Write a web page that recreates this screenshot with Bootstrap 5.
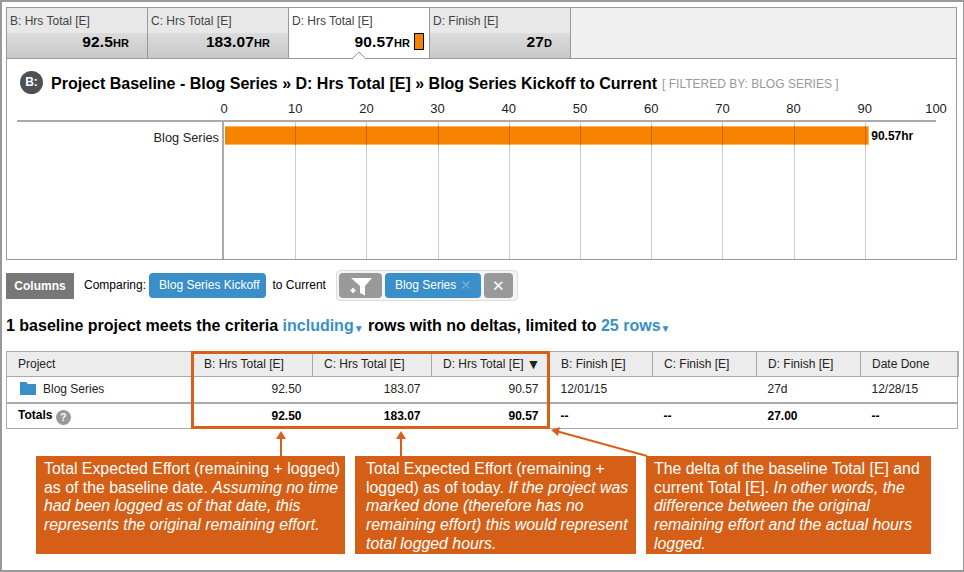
<!DOCTYPE html>
<html lang="en"><head><meta charset="utf-8">
<link href="https://cdn.jsdelivr.net/npm/bootstrap@5.3.0/dist/css/bootstrap.min.css" rel="stylesheet">
<style>
html,body{margin:0;background:#fff}
body{font-family:"Liberation Sans",Arial,sans-serif;color:#000;font-size:12px;width:964px;height:572px;overflow:hidden}
.frame{width:964px;height:572px;border:2px solid #999;border-right-width:1px;padding:5px 6px 0 4px;position:relative}
.tabbar{height:52px;border:1px solid #999;background:#f0f0f0}
.stab{width:141px;border-right:1px solid #999;background:linear-gradient(#e8e8e8 0,#e8e8e8 49%,#dcdcdc 50%,#c8c8c8 100%);padding:6px 3px 0 3px;position:relative}
.stab-on{background:#fff}
.stab-title{font-size:12px;color:#444;line-height:14px}
.stab-val{font-size:15.5px;font-weight:700;line-height:18px;margin-top:5px;padding-right:15px;text-align:right;letter-spacing:.1px}
.stab-val small{font-size:11px;font-weight:700}
.stab-on .stab-val{padding-right:2px}
.swatch{display:inline-block;width:10px;height:17px;background:#f88300;border:1px solid #000;margin-left:4px;vertical-align:-3px}
.notch{position:absolute;left:63px;bottom:-1px;width:14px;height:7px}
.chartbox{height:201px;border:1px solid #999;border-top:0;padding:0 20px 0 10px;position:relative}
.ctitle{height:43px;padding:15px 0 0 3px;gap:6px;font-size:16px;font-weight:700;line-height:20px;white-space:nowrap}
.ctitle .flt{font-size:12px;font-weight:400;color:#999;margin-left:-1px}
.bcirc{width:23px;height:23px;border-radius:50%;background:#4b5155;color:#fff;font-size:12px;font-weight:700;line-height:23px;text-align:center;margin-right:2px;flex:none;margin-top:-3px}
.axlabels{height:14px;margin-left:207px;width:712px;position:relative}
.axlabels span{position:absolute;top:0;transform:translateX(-50%);font-size:13px;color:#222;line-height:14px}
.axline{height:2px;background:#aaa;margin-top:4px;width:919px}
.plotrow{height:137px}
.plotname{width:205px;text-align:right;padding:9px 3px 0 0;font-size:12.8px;color:#222;line-height:14px}
.plot{width:714px;height:137px;border-left:2px solid #aaa;position:relative}
.gline{position:absolute;top:0;bottom:0;width:1px;background:#ccc}
.barfill{position:absolute;left:1px;top:4px;height:19px;background:#f88300;border:solid #fbb566;border-width:1px 1px 1px 0}
.gover{position:absolute;top:4px;height:19px;width:1px;background:#c86a00}
.barval{position:absolute;top:7px;font-size:12px;font-weight:700;line-height:14px}
.ctrl{height:31px;margin-top:10px;font-size:12px;white-space:nowrap}
.colbtn{background:#777;color:#fff;font-weight:700;font-size:12px;width:68px;height:26px;line-height:26px;text-align:center;margin-top:3px;margin-right:10px}
.bluechip{background:#3a8fc9;color:#fff;border-radius:4px;font-size:12px;height:25px;line-height:24px;padding:0 6px 0 10px}
.filtwrap{border:1px solid #ddd;background:#f4f4f4;border-radius:4px;height:31px;width:182px;padding:2px;gap:3px;margin-left:10px}
.greybtn{background:#999;border-radius:4px;color:#fff;height:25px}
.hline{font-size:16px;font-weight:700;line-height:20px;margin-top:15px;white-space:nowrap}
.hline .lnk{color:#3a8fc9}
.tri{font-size:10px;vertical-align:-1px}
.gridtbl{width:951px;margin-top:12px;border-collapse:collapse;table-layout:fixed;font-size:12px}
.gridtbl th{background:#ececec;font-weight:400;color:#222;height:25px;padding:0 0 0 11px;border:1px solid #aaa;border-width:1px 1px 1px 0}
.gridtbl td{height:26px;padding:0 11px;border-right:0;color:#222}
.gridtbl tr.tot td{height:26px;border-top:2px solid #aaa;border-bottom:1px solid #aaa;font-weight:700;color:#000}
.gridtbl tr>*:first-child{border-left:1px solid #aaa}
.gridtbl tr>*:last-child{border-right:2px solid #aaa}
.gridtbl td:last-child{border-right:1px solid #aaa}
.num{text-align:right}
.sortmark{font-size:14px;margin-left:3px;vertical-align:-1px;line-height:12px}
.qm{display:inline-block;width:15px;height:15px;border-radius:50%;background:#999;color:#fff;font-size:10px;line-height:15px;text-align:center;vertical-align:-2px}
.foldicon{margin-right:7px;vertical-align:-2px}
.hilite{position:absolute;left:189px;top:349px;width:359px;height:78px;border:3px solid #d9601a;pointer-events:none}
.arrows{position:absolute;left:-2px;top:-2px;width:964px;height:572px;pointer-events:none}
.notes{margin-top:27px;margin-left:30px;gap:10px}
.notebox{background:#d65f17;color:#fff;font-size:15.85px;line-height:18.7px;height:98px;padding:4px 2px 0 8px;overflow:hidden}
.notemid{padding-left:11px}
</style></head><body>
<div class="frame">
 <div class="tabbar d-flex">
  <div class="stab"><div class="stab-title">B: Hrs Total [E]</div><div class="stab-val">92.5<small>HR</small></div></div>
  <div class="stab"><div class="stab-title">C: Hrs Total [E]</div><div class="stab-val">183.07<small>HR</small></div></div>
  <div class="stab stab-on"><div class="stab-title">D: Hrs Total [E]</div><div class="stab-val">90.57<small>HR</small><span class="swatch"></span></div>
   <svg class="notch" viewBox="0 0 14 7"><path d="M0 7L7 0L14 7" fill="#fff" stroke="#999"/></svg></div>
  <div class="stab"><div class="stab-title">D: Finish [E]</div><div class="stab-val">27<small>D</small></div></div>
 </div>
 <div class="chartbox">
  <div class="ctitle d-flex align-items-start"><span class="bcirc">B:</span><span>Project Baseline - Blog Series » D: Hrs Total [E] » Blog Series Kickoff to Current</span><span class="flt">[ FILTERED BY: BLOG SERIES ]</span></div>
  <div class="axlabels"><span style="left:0%">0</span><span style="left:10%">10</span><span style="left:20%">20</span><span style="left:30%">30</span><span style="left:40%">40</span><span style="left:50%">50</span><span style="left:60%">60</span><span style="left:70%">70</span><span style="left:80%">80</span><span style="left:90%">90</span><span style="left:100%">100</span></div>
  <div class="axline"></div>
  <div class="plotrow d-flex">
   <div class="plotname">Blog Series</div>
   <div class="plot">
    <i class="gline" style="left:10%"></i><i class="gline" style="left:20%"></i><i class="gline" style="left:30%"></i><i class="gline" style="left:40%"></i><i class="gline" style="left:50%"></i><i class="gline" style="left:60%"></i><i class="gline" style="left:70%"></i><i class="gline" style="left:80%"></i><i class="gline" style="left:90%"></i>
    <div class="barfill" style="width:90.45%"></div>
    <i class="gover" style="left:10%"></i><i class="gover" style="left:20%"></i><i class="gover" style="left:30%"></i><i class="gover" style="left:40%"></i><i class="gover" style="left:50%"></i><i class="gover" style="left:60%"></i><i class="gover" style="left:70%"></i><i class="gover" style="left:80%"></i><i class="gover" style="left:90%"></i>
    <div class="barval" style="left:90.9%">90.57hr</div>
   </div>
  </div>
 </div>
 <div class="ctrl d-flex align-items-start">
  <div class="colbtn">Columns</div>
  <span class="mt-1 pt-1" style="line-height:14px;margin-right:3px">Comparing:</span>
  <span class="bluechip mt-1" style="margin-top:3px!important">Blog Series Kickoff</span>
  <span class="mt-1 pt-1" style="line-height:14px;margin-left:7px">to Current</span>
  <div class="filtwrap d-flex">
   <div class="greybtn d-flex align-items-center justify-content-center" style="width:43px"><svg width="32" height="22" viewBox="0 0 32 22"><path d="M7 3H28L21 11V20.5L16 18V11Z" fill="#fff"/><path d="M6.500 15.500H11.500M9 13V18" stroke="#fff" stroke-width="2" fill="none"/></svg></div>
   <div class="bluechip" style="width:96px">Blog Series <span style="color:#6fb1dd;font-size:14px;line-height:14px;vertical-align:-1px">✕</span></div>
   <div class="greybtn text-center" style="width:29px;font-size:15px;line-height:25px">✕</div>
  </div>
 </div>
 <div class="hline">1 baseline project meets the criteria <span class="lnk">including<span class="tri">▼</span></span> rows with no deltas, limited to <span class="lnk">25 rows<span class="tri">▼</span></span></div>
 <table class="gridtbl">
  <colgroup><col style="width:186px"><col style="width:120px"><col style="width:119px"><col style="width:118px"><col style="width:103px"><col style="width:104px"><col style="width:104px"><col style="width:97px"></colgroup>
  <thead><tr><th>Project</th><th>B: Hrs Total [E]</th><th>C: Hrs Total [E]</th><th>D: Hrs Total [E]<span class="sortmark">▼</span></th><th>B: Finish [E]</th><th>C: Finish [E]</th><th>D: Finish [E]</th><th>Date Done</th></tr></thead>
  <tbody>
   <tr><td style="padding-left:13px"><svg width="16" height="13" viewBox="0 0 16 13" class="foldicon"><path d="M0 0H6L8 2H16V13H0Z" fill="#3a8fc9"/></svg>Blog Series</td><td class="num">92.50</td><td class="num">183.07</td><td class="num">90.57</td><td>12/01/15</td><td></td><td>27d</td><td>12/28/15</td></tr>
   <tr class="tot"><td>Totals <span class="qm">?</span></td><td class="num">92.50</td><td class="num">183.07</td><td class="num">90.57</td><td>--</td><td>--</td><td>27.00</td><td>--</td></tr>
  </tbody>
 </table>
 <div class="notes d-flex">
  <div class="notebox" style="width:309px">Total Expected Effort (remaining + logged) as of the baseline date. <em>Assuming no time had been logged as of that date, this represents the original remaining effort.</em></div>
  <div class="notebox notemid" style="width:281px">Total Expected Effort (remaining + logged) as of today. <em>If the project was marked done (therefore has no remaining effort) this would represent total logged hours.</em></div>
  <div class="notebox" style="width:285px">The delta of the baseline Total [E] and current Total [E]. <em>In other words, the difference between the original remaining effort and the actual hours logged.</em></div>
 </div>
 <div class="hilite"></div>
 <svg class="arrows" viewBox="0 0 964 572"><g fill="none" stroke="#d9601a" stroke-width="2"><path d="M281 456V434"/><path d="M401 456V434"/><path d="M647 456L556 431"/></g><g fill="#d9601a"><path d="M281 431L276 439H286Z"/><path d="M401 431L396 439H406Z"/><path d="M551 430L560 427L558 436Z"/></g></svg>
</div>
<script src="https://cdn.jsdelivr.net/npm/bootstrap@5.3.0/dist/js/bootstrap.bundle.min.js"></script>
</body></html>
